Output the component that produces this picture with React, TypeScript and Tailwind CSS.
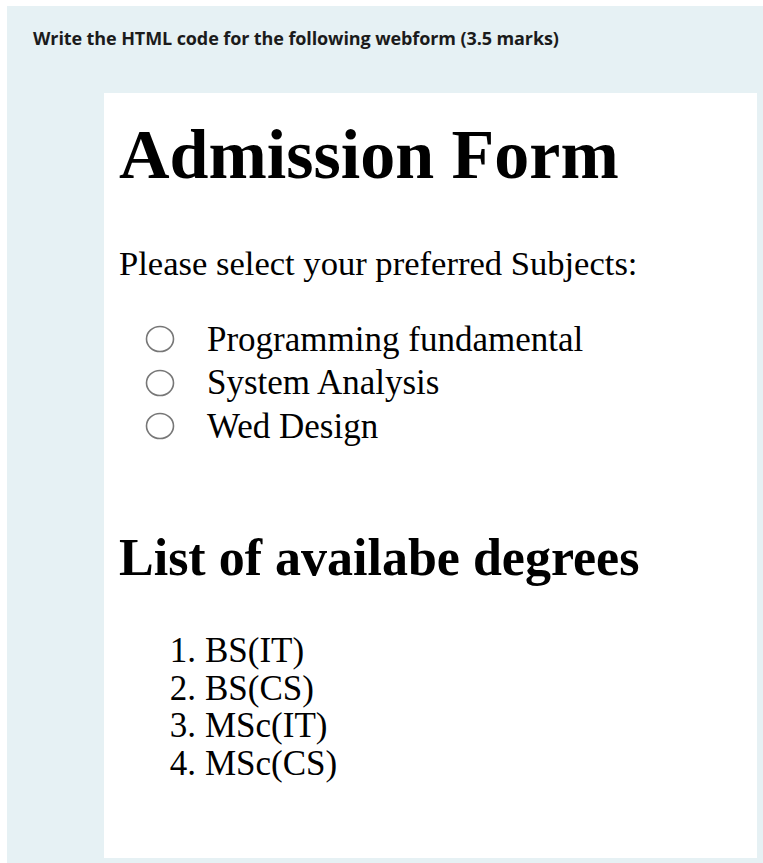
import React from "react";

const serif = { fontFamily: '"Liberation Serif", "Times New Roman", serif' };

function Radio() {
  return (
    <svg width="30" height="28" viewBox="0 0 30 28" className="shrink-0">
      <ellipse cx="15" cy="14" rx="13.5" ry="12.5" fill="white" stroke="#777" strokeWidth="1.6" />
    </svg>
  );
}

export default function App() {
  const subjects = ["Programming fundamental", "System Analysis", "Wed Design"];
  const degrees = ["BS(IT)", "BS(CS)", "MSc(IT)", "MSc(CS)"];
  return (
    <div className="w-[763px] h-[863px] bg-white pl-[7px] pt-[6px]">
      <div className="h-full bg-[#e6f1f4] flex flex-col">
        <div
          className="pl-[26px] pt-[19px] h-[87px] text-[18px] font-bold text-[#1b1b1b] tracking-[-0.1px]"
          style={{ fontFamily: '"Open Sans", "Noto Sans", sans-serif' }}
        >
          Write the HTML code for the following webform (3.5 marks)
        </div>
        <div className="ml-[97px] mr-[6px] h-[765px] bg-white pl-[15px] text-black" style={serif}>
          <h1 className="text-[70px] font-bold leading-none mt-[27px]">Admission Form</h1>
          <p className="text-[34.6px] leading-none mt-[56px]">Please select your preferred Subjects:</p>
          <div className="mt-[37px] flex flex-col">
            {subjects.map((s) => (
              <div key={s} className="flex items-center h-[43.5px]">
                <div className="ml-[26px] mr-[32px] flex">
                  <Radio />
                </div>
                <span className="text-[35px] leading-none">{s}</span>
              </div>
            ))}
          </div>
          <h2 className="text-[52px] font-bold leading-none mt-[84px]">List of availabe degrees</h2>
          <ol className="mt-[48px] flex flex-col">
            {degrees.map((d, i) => (
              <li key={d} className="flex text-[35px] leading-[37.5px]">
                <span className="w-[86px] text-right pr-[9px]">{i + 1}.</span>
                <span>{d}</span>
              </li>
            ))}
          </ol>
        </div>
      </div>
    </div>
  );
}
